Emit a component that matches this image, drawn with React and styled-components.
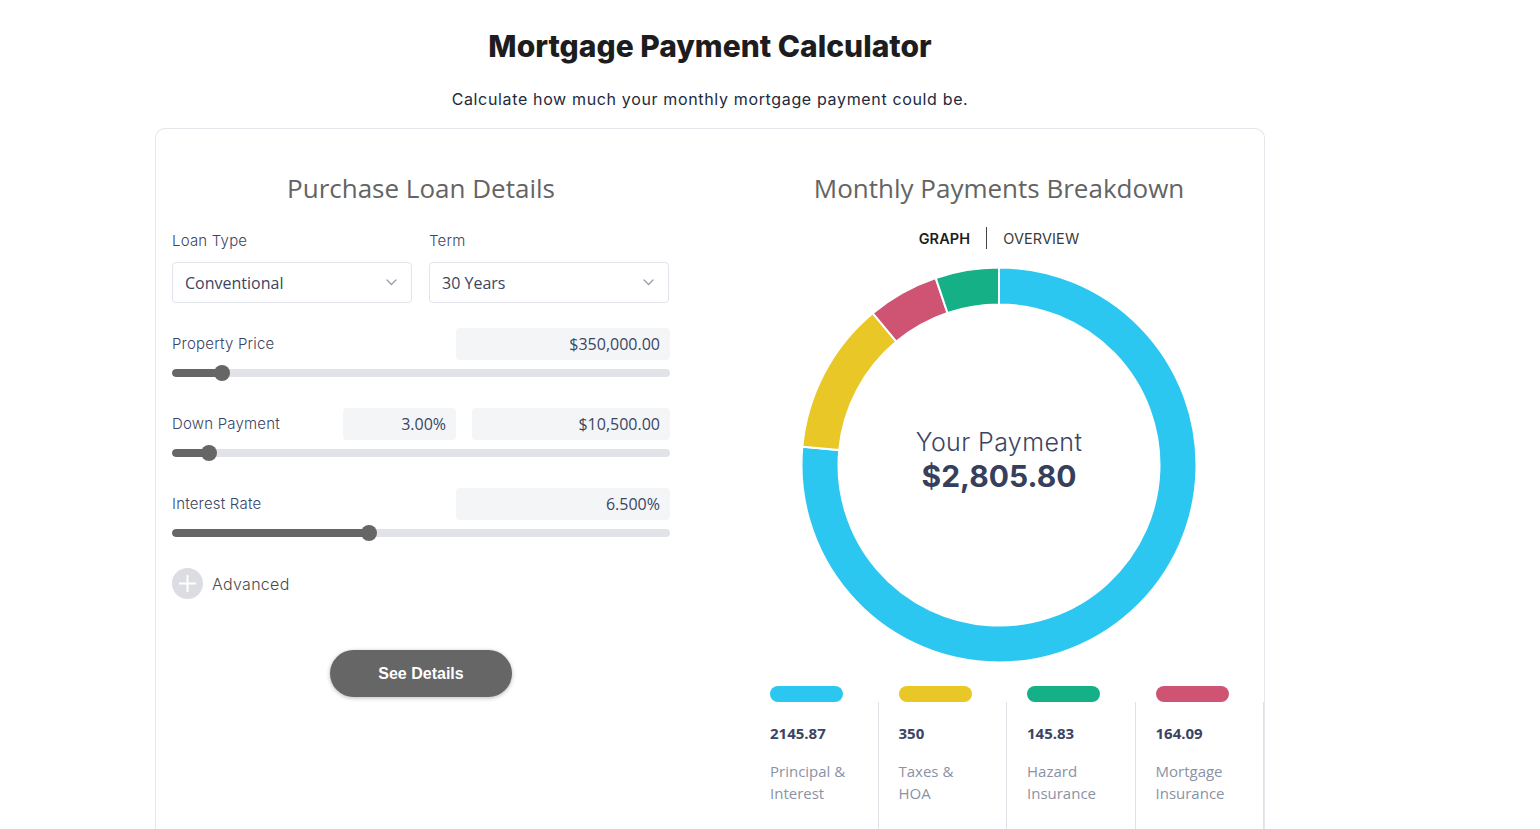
import React from "react";
import styled, { createGlobalStyle } from "styled-components";

const Global = createGlobalStyle`
  html, body { margin: 0; padding: 0; background: #fff; }
  body { font-family: "Open Sans", sans-serif; overflow: hidden; }
  * { box-sizing: border-box; }
`;

const Page = styled.div`
  width: 1420px;
  display: flex;
  flex-direction: column;
  align-items: center;
  padding-top: 27px;
`;

const Title = styled.h1`
  margin: 0;
  font-family: Inter, sans-serif;
  font-weight: 800;
  font-size: 30px;
  line-height: 38px;
  color: #1d1d1f;
  letter-spacing: 0px;
`;

const Subtitle = styled.p`
  margin: 23px 0 0;
  font-family: Inter, sans-serif;
  font-size: 16px;
  line-height: 22px;
  letter-spacing: 0.65px;
  color: #222a3c;
`;

const Card = styled.div`
  margin-top: 18px;
  width: 1110px;
  border: 1px solid #e4e6eb;
  border-bottom: none;
  border-radius: 10px 10px 0 0;
  padding: 41px 0 0 16px;
  display: flex;
  gap: 64px;
`;

const LeftCol = styled.div`
  width: 498px;
  display: flex;
  flex-direction: column;
`;

const RightCol = styled.div`
  width: 530px;
  display: flex;
  flex-direction: column;
  align-items: center;
`;

const SectionTitle = styled.h2`
  margin: 0;
  font-family: "Open Sans", sans-serif;
  font-weight: 400;
  font-size: 26px;
  line-height: 36px;
  color: #646464;
  text-align: center;
  align-self: stretch;
`;

const Label = styled.span`
  font-family: Inter, sans-serif;
  font-weight: 300;
  font-size: 15px;
  line-height: 22px;
  letter-spacing: 0.2px;
  color: #3b4563;
  flex: 1;
`;

const SelectGrid = styled.div`
  margin-top: 24px;
  display: grid;
  grid-template-columns: 240px 240px;
  column-gap: 17px;
  row-gap: 10px;
`;

const Select = styled.div`
  height: 41px;
  border: 1px solid #e1e4ea;
  border-radius: 4px;
  display: flex;
  align-items: center;
  justify-content: space-between;
  padding: 0 14px 0 12px;
  font-family: "Open Sans", sans-serif;
  font-size: 16px;
  color: #3b4563;
`;

const FieldRow = styled.div`
  margin-top: ${(p) => p.$mt || 27}px;
  display: flex;
  align-items: center;
  gap: 16px;
`;

const ValueBox = styled.div`
  width: ${(p) => p.$w}px;
  height: 32px;
  background: #f4f5f7;
  border-radius: 4px;
  display: flex;
  align-items: center;
  justify-content: flex-end;
  padding-right: 10px;
  font-family: "Open Sans", sans-serif;
  font-size: 16px;
  color: #3b4563;
`;

const SliderWrap = styled.div`
  margin-top: 5px;
  height: 16px;
  position: relative;
  display: flex;
  align-items: center;
`;

const Track = styled.div`
  width: 100%;
  height: 8px;
  border-radius: 4px;
  background: #e2e3e8;
  overflow: hidden;
`;

const Fill = styled.div`
  height: 100%;
  background: #666;
  border-radius: 4px;
`;

const Thumb = styled.div`
  position: absolute;
  top: 0;
  width: 16px;
  height: 16px;
  margin-left: -8px;
  border-radius: 50%;
  background: #666;
`;

const AdvancedRow = styled.div`
  margin-top: 27px;
  display: flex;
  align-items: center;
  gap: 9px;
`;

const PlusCircle = styled.div`
  width: 31px;
  height: 31px;
  border-radius: 50%;
  background: #dcdde2;
  display: flex;
  align-items: center;
  justify-content: center;
`;

const AdvancedText = styled.span`
  font-family: Inter, sans-serif;
  font-weight: 300;
  font-size: 16px;
  letter-spacing: 0.3px;
  color: #4a4a4a;
`;

const Button = styled.button`
  margin: 51px auto 0;
  width: 182px;
  height: 47px;
  border: none;
  border-radius: 24px;
  background: #666;
  color: #fff;
  font-family: "Liberation Sans", Arial, sans-serif;
  font-weight: 700;
  font-size: 16px;
  box-shadow: 0 1px 4px rgba(0, 0, 0, 0.28);
  cursor: pointer;
`;

const Tabs = styled.div`
  margin-top: 21px;
  display: flex;
  align-items: center;
  height: 22px;
`;

const Tab = styled.span`
  font-family: Inter, sans-serif;
  font-size: 14.5px;
  letter-spacing: 0.1px;
  text-transform: uppercase;
  font-weight: ${(p) => (p.$active ? 600 : 400)};
  color: ${(p) => (p.$active ? "#1e1e1e" : "#3a3a3a")};
`;

const TabDivider = styled.span`
  width: 1px;
  height: 22px;
  background: #444;
  margin: 0 16px;
`;

const DonutBox = styled.div`
  margin-top: 18px;
  width: 396px;
  height: 396px;
  position: relative;
`;

const Center = styled.div`
  position: absolute;
  inset: 0;
  display: flex;
  flex-direction: column;
  align-items: center;
  justify-content: center;
  padding-bottom: 8px;
`;

const PayLabel = styled.div`
  font-family: Inter, sans-serif;
  font-weight: 300;
  font-size: 25px;
  line-height: 30px;
  letter-spacing: 0.4px;
  color: #3b4563;
`;

const PayValue = styled.div`
  font-family: Inter, sans-serif;
  font-weight: 700;
  font-size: 30px;
  line-height: 38px;
  color: #36405c;
`;

const Legend = styled.div`
  margin-top: 23px;
  align-self: flex-end;
  width: 514px;
  display: grid;
  grid-template-columns: repeat(4, 1fr);
`;

const LegendItem = styled.div`
  display: flex;
  flex-direction: column;
`;

const Pill = styled.div`
  margin-left: 20px;
  width: 73px;
  height: 16px;
  border-radius: 8px;
  background: ${(p) => p.$color};
`;

const LegendBody = styled.div`
  border-right: 1px solid #dfe1e6;
  padding: 20px 0 60px 20px;
`;

const LegendValue = styled.div`
  font-family: "Open Sans", sans-serif;
  font-weight: 700;
  font-size: 15px;
  line-height: 22px;
  color: #3b4563;
`;

const LegendLabel = styled.div`
  margin-top: 16px;
  font-family: "Open Sans", sans-serif;
  font-weight: 400;
  font-size: 15px;
  line-height: 22px;
  color: #8a92a5;
`;

const Chevron = () => (
  <svg width="11" height="7" viewBox="0 0 11 7" fill="none">
    <path d="M1 1l4.5 4.5L10 1" stroke="#9aa1ae" strokeWidth="1.4" strokeLinecap="round" strokeLinejoin="round" />
  </svg>
);

const Slider = ({ pct }) => (
  <SliderWrap>
    <Track>
      <Fill style={{ width: `${pct}%` }} />
    </Track>
    <Thumb style={{ left: `${pct}%` }} />
  </SliderWrap>
);

const segments = [
  { value: 2145.87, color: "#2cc7f1" },
  { value: 350, color: "#e8c726" },
  { value: 164.09, color: "#cf5373" },
  { value: 145.83, color: "#16b086" },
];

const legend = [
  { value: "2145.87", color: "#2cc7f1", label: ["Principal &", "Interest"] },
  { value: "350", color: "#e8c726", label: ["Taxes &", "HOA"] },
  { value: "145.83", color: "#16b086", label: ["Hazard", "Insurance"] },
  { value: "164.09", color: "#cf5373", label: ["Mortgage", "Insurance"] },
];

const pt = (cx, cy, r, a) => [cx + r * Math.sin(a), cy - r * Math.cos(a)];

function sector(cx, cy, R, r, a0, a1) {
  const large = a1 - a0 > Math.PI ? 1 : 0;
  const [x0, y0] = pt(cx, cy, R, a0);
  const [x1, y1] = pt(cx, cy, R, a1);
  const [x2, y2] = pt(cx, cy, r, a1);
  const [x3, y3] = pt(cx, cy, r, a0);
  return `M${x0} ${y0} A${R} ${R} 0 ${large} 1 ${x1} ${y1} L${x2} ${y2} A${r} ${r} 0 ${large} 0 ${x3} ${y3} Z`;
}

const Donut = () => {
  const total = segments.reduce((s, x) => s + x.value, 0);
  let acc = 0;
  return (
    <svg width="396" height="396" viewBox="0 0 396 396">
      {segments.map((s, i) => {
        const a0 = (acc / total) * Math.PI * 2;
        acc += s.value;
        const a1 = (acc / total) * Math.PI * 2;
        return (
          <path
            key={i}
            d={sector(198, 198, 197.5, 160.5, a0, a1)}
            fill={s.color}
            stroke="#fff"
            strokeWidth="2"
          />
        );
      })}
    </svg>
  );
};

export default function App() {
  return (
    <>
      <Global />
      <Page>
        <Title>Mortgage Payment Calculator</Title>
        <Subtitle>Calculate how much your monthly mortgage payment could be.</Subtitle>
        <Card>
          <LeftCol>
            <SectionTitle>Purchase Loan Details</SectionTitle>
            <SelectGrid>
              <Label>Loan Type</Label>
              <Label>Term</Label>
              <Select>
                Conventional
                <Chevron />
              </Select>
              <Select>
                30 Years
                <Chevron />
              </Select>
            </SelectGrid>

            <FieldRow $mt={25}>
              <Label>Property Price</Label>
              <ValueBox $w={214}>$350,000.00</ValueBox>
            </FieldRow>
            <Slider pct={10} />

            <FieldRow>
              <Label>Down Payment</Label>
              <ValueBox $w={113}>3.00%</ValueBox>
              <ValueBox $w={198}>$10,500.00</ValueBox>
            </FieldRow>
            <Slider pct={7.4} />

            <FieldRow>
              <Label>Interest Rate</Label>
              <ValueBox $w={214}>6.500%</ValueBox>
            </FieldRow>
            <Slider pct={39.6} />

            <AdvancedRow>
              <PlusCircle>
                <svg width="17" height="17" viewBox="0 0 17 17">
                  <path d="M8.5 0v17M0 8.5h17" stroke="#fff" strokeWidth="2" />
                </svg>
              </PlusCircle>
              <AdvancedText>Advanced</AdvancedText>
            </AdvancedRow>

            <Button>See Details</Button>
          </LeftCol>

          <RightCol>
            <SectionTitle>Monthly Payments Breakdown</SectionTitle>
            <Tabs>
              <Tab $active>Graph</Tab>
              <TabDivider />
              <Tab>Overview</Tab>
            </Tabs>
            <DonutBox>
              <Donut />
              <Center>
                <PayLabel>Your Payment</PayLabel>
                <PayValue>$2,805.80</PayValue>
              </Center>
            </DonutBox>
            <Legend>
              {legend.map((l) => (
                <LegendItem key={l.value}>
                  <Pill $color={l.color} />
                  <LegendBody>
                    <LegendValue>{l.value}</LegendValue>
                    <LegendLabel>
                      {l.label[0]}
                      <br />
                      {l.label[1]}
                    </LegendLabel>
                  </LegendBody>
                </LegendItem>
              ))}
            </Legend>
          </RightCol>
        </Card>
      </Page>
    </>
  );
}
